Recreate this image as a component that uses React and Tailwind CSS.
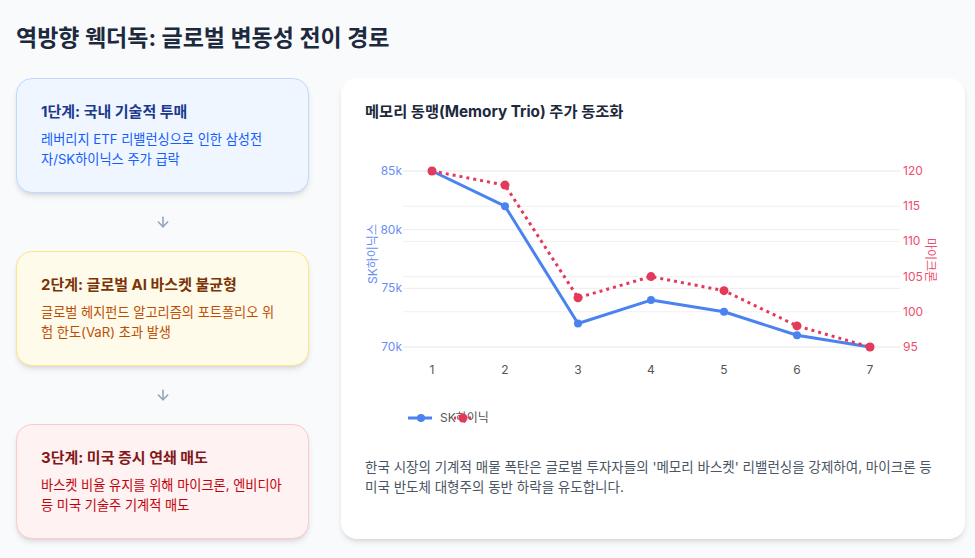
import { ArrowDown } from "lucide-react";

const font = { fontFamily: "Inter, 'Noto Sans CJK KR', sans-serif" };

const steps = [
  {
    title: "1단계: 국내 기술적 투매",
    desc: "레버리지 ETF 리밸런싱으로 인한 삼성전자/SK하이닉스 주가 급락",
    box: "bg-blue-50 border-blue-200",
    titleColor: "text-blue-900",
    descColor: "text-blue-600",
  },
  {
    title: "2단계: 글로벌 AI 바스켓 불균형",
    desc: "글로벌 헤지펀드 알고리즘의 포트폴리오 위험 한도(VaR) 초과 발생",
    box: "bg-amber-50 border-amber-200",
    titleColor: "text-amber-900",
    descColor: "text-amber-700",
  },
  {
    title: "3단계: 미국 증시 연쇄 매도",
    desc: "바스켓 비율 유지를 위해 마이크론, 엔비디아 등 미국 기술주 기계적 매도",
    box: "bg-red-50 border-red-200",
    titleColor: "text-red-900",
    descColor: "text-red-700",
  },
];

const sk = [85, 82, 72, 74, 73, 71, 70];
const mu = [120, 118, 102, 105, 103, 98, 95];
const xs = [67, 140, 213, 286, 359, 432, 505];
const skY = (v) => 31 + ((85 - v) / 15) * 176;
const muY = (v) => 31 + ((120 - v) / 25) * 176;

function Chart() {
  const leftTicks = [85, 80, 75, 70];
  const rightTicks = [120, 115, 110, 105, 100, 95];
  const skPts = sk.map((v, i) => `${xs[i]},${skY(v)}`).join(" ");
  const muPts = mu.map((v, i) => `${xs[i]},${muY(v)}`).join(" ");

  return (
    <svg width="570" height="300" className="block overflow-visible" style={font}>
      {/* grid */}
      {leftTicks.map((t) => (
        <line key={"l" + t} x1="38" x2="535" y1={skY(t)} y2={skY(t)} stroke="#ececec" strokeWidth="1" />
      ))}
      {rightTicks.map((t) => (
        <line key={"r" + t} x1="38" x2="535" y1={muY(t)} y2={muY(t)} stroke="#f0f0f0" strokeWidth="1" />
      ))}

      {/* axis labels */}
      {leftTicks.map((t) => (
        <text key={"lt" + t} x="37" y={skY(t) + 4} textAnchor="end" fontSize="12" fill="#6b8cf5">
          {t}k
        </text>
      ))}
      {rightTicks.map((t) => (
        <text key={"rt" + t} x="538" y={muY(t) + 4} fontSize="12" fill="#ee4d6c">
          {t}
        </text>
      ))}
      {xs.map((x, i) => (
        <text key={"x" + i} x={x} y="234" textAnchor="middle" fontSize="12" fill="#555">
          {i + 1}
        </text>
      ))}
      <text x="0" y="0" transform="translate(12 114) rotate(-90)" textAnchor="middle" fontSize="12" fill="#6b8cf5">
        SK하이닉스
      </text>
      <text x="0" y="0" transform="translate(561 120) rotate(90)" textAnchor="middle" fontSize="12" fill="#ee4d6c">
        마이크론
      </text>

      {/* series */}
      <polyline points={skPts} fill="none" stroke="#4a82f0" strokeWidth="3" strokeLinejoin="round" />
      {sk.map((v, i) => (
        <circle key={"sp" + i} cx={xs[i]} cy={skY(v)} r="4" fill="#4a82f0" />
      ))}
      <polyline points={muPts} fill="none" stroke="#e5395b" strokeWidth="3" strokeDasharray="3 4" />
      {mu.map((v, i) => (
        <circle key={"mp" + i} cx={xs[i]} cy={muY(v)} r="4.5" fill="#e5395b" />
      ))}

      {/* legend */}
      <line x1="43" x2="67" y1="278" y2="278" stroke="#4a82f0" strokeWidth="3" />
      <circle cx="56" cy="278" r="4" fill="#4a82f0" />
      <text x="75" y="282" fontSize="12" fill="#555">
        SK하이닉
      </text>
      <line x1="89" x2="106" y1="278" y2="278" stroke="#e5395b" strokeWidth="3" strokeDasharray="2 3" />
      <circle cx="98" cy="278" r="4.5" fill="#e5395b" />
    </svg>
  );
}

export default function App() {
  return (
    <div className="min-h-screen bg-slate-50 px-4 pt-6 pb-4" style={font}>
      <h1 className="text-[23px] font-bold text-slate-800 leading-7 mb-[26px]">
        역방향 웩더독: 글로벌 변동성 전이 경로
      </h1>

      <div className="flex gap-8">
        <div className="w-[293px] shrink-0 flex flex-col">
          {steps.map((s, i) => (
            <div key={s.title}>
              {i > 0 && (
                <div className="h-[58px] flex items-center justify-center">
                  <ArrowDown className="w-4 h-4 text-slate-400" strokeWidth={2.25} />
                </div>
              )}
              <div className={`rounded-2xl border ${s.box} shadow-md px-6 py-[23px]`}>
                <h3 className={`text-[15px] font-bold leading-5 mb-[7px] ${s.titleColor}`}>{s.title}</h3>
                <p className={`text-[13.2px] leading-5 ${s.descColor}`}>{s.desc}</p>
              </div>
            </div>
          ))}
        </div>

        <div className="flex-1 bg-white rounded-2xl shadow-md pl-6 pr-[30px] py-6">
          <h3 className="text-[15.3px] font-bold leading-5 text-slate-800 mb-[18px]">
            메모리 동맹(Memory Trio) 주가 동조화
          </h3>
          <Chart />
          <p className="mt-[17px] text-[13.5px] leading-5 text-gray-600">
            한국 시장의 기계적 매물 폭탄은 글로벌 투자자들의 '메모리 바스켓' 리밸런싱을 강제하여, 마이크론 등
            미국 반도체 대형주의 동반 하락을 유도합니다.
          </p>
        </div>
      </div>
    </div>
  );
}
